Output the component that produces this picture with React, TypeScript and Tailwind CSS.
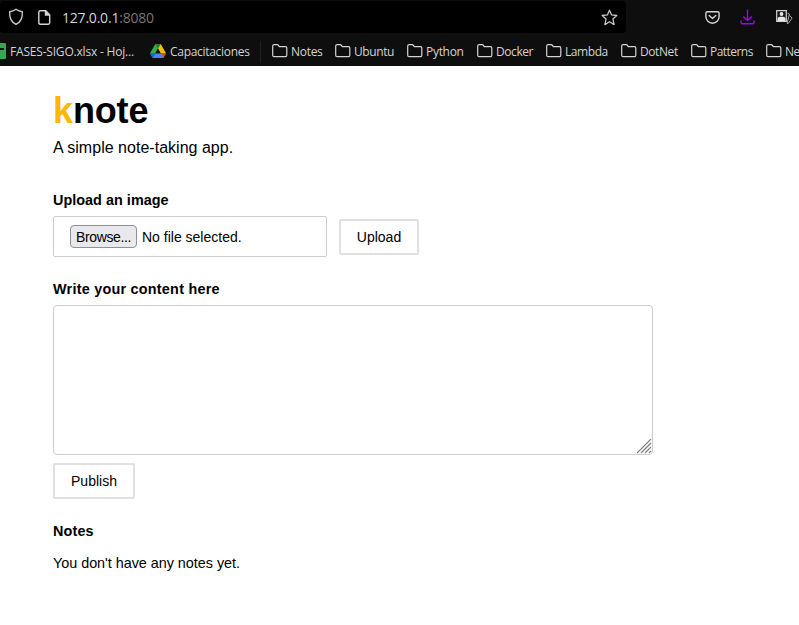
import type { ReactNode } from "react";

function Folder() {
  return (
    <svg width="16" height="14" viewBox="0 0 16 14" fill="none" stroke="#d4d4d4" strokeWidth="1.2" className="-mt-px shrink-0">
      <path d="M.7 2.200Q.7.700 2.200.700h3q.8 0 1.200.6l.9 1.300H13.500q1.300 0 1.300 1.300v7.400q0 1.300-1.300 1.300H2.200Q.7 12.600.7 11.300Z" />
    </svg>
  );
}

function Bookmark({ width, tracking = "tracking-[-0.025em]", children }: { width: string; tracking?: string; children: ReactNode }) {
  return (
    <div className={`flex shrink-0 items-center gap-[3px] ${width}`}>
      <Folder />
      <span className={tracking}>{children}</span>
    </div>
  );
}

function Browser() {
  return (
    <header className="h-[66px] overflow-hidden bg-[#0e0e0e] font-['Open_Sans','Noto_Sans',sans-serif] text-[#d4d4d4]">
      <div className="flex h-[33px] items-center pt-px">
        <div className="flex h-8 w-[626px] shrink-0 items-center rounded-[4px] bg-black pr-2 pl-2">
          <svg width="16" height="18" viewBox="0 0 16 18" fill="none" stroke="#c8c8c8" strokeWidth="1.4" className="shrink-0">
            <path d="M8 1.200C10 2.700 12 3.400 14.300 3.700C14.700 9 13.400 13.700 8 16.400C2.600 13.700 1.300 9 1.700 3.700C4 3.400 6 2.700 8 1.200Z" strokeLinejoin="round" />
          </svg>
          <svg width="13" height="15" viewBox="0 0 13 15" fill="none" stroke="#d4d4d4" strokeWidth="1.4" className="ml-[14px] shrink-0">
            <path d="M2.200.8h5.500l4 4v8q0 1.400-1.400 1.400H2.200Q.8 14.200.8 12.800V2.200Q.8.8 2.200.8Z" />
            <path d="M7.500.8v4.200h4.200" fill="#d4d4d4" />
          </svg>
          <span className="ml-[11px] text-[14px] tracking-[-0.015em]">
            127.0.0.1<span className="text-[#777]">:8080</span>
          </span>
          <svg width="17" height="17" viewBox="0 0 17 17" fill="none" stroke="#c8c8c8" strokeWidth="1.3" className="ml-auto shrink-0">
            <path d="m8.500 1.200 2.100 4.700 5.200.6-3.900 3.400 1.200 5.700-4.600-2.900-4.600 2.900 1.200-5.700L1.200 6.500l5.200-.6Z" strokeLinejoin="round" />
          </svg>
        </div>
        <svg width="15" height="13" viewBox="0 0 15 13" fill="none" stroke="#d4d4d4" strokeWidth="1.4" className="ml-[79px] shrink-0">
          <path d="M2.300.8h10.400q1.400 0 1.400 1.400v3.600a6.600 6.400 0 0 1-13.200 0V2.200Q.9.8 2.300.8Z" />
          <path d="m4.200 4.500 3.300 3.100 3.300-3.100" strokeLinecap="round" strokeLinejoin="round" />
        </svg>
        <svg width="15" height="16" viewBox="0 0 15 16" fill="none" stroke="#9a00ff" strokeWidth="1.4" className="ml-5 shrink-0">
          <path d="M7.500.5v11M3.200 7.400l4.300 4.200 4.300-4.200M1 11.500v1.800q0 1.500 1.500 1.500h10q1.500 0 1.500-1.500v-1.800" strokeLinejoin="round" />
        </svg>
        <svg width="17" height="16" viewBox="0 0 17 16" className="ml-[21px] shrink-0">
          <path d="M.7 1.700h9.600v10.600H.7Z" fill="#171717" stroke="#d4d4d4" strokeWidth="1.2" />
          <circle cx="5.500" cy="5" r="1.900" fill="#e8e8e8" />
          <path d="M1.500 11.900V10.200q0-2.500 2.500-2.500h3q2.500 0 2.500 2.500v1.700Z" fill="#e8e8e8" />
          <path d="m11.500 4.200 1.900.8-2.200 9.200M13.700 6.500l2.300 2.600-3.500 5.100-1.600.4" fill="none" stroke="#aaa" strokeWidth="1" />
        </svg>
      </div>
      <div className="flex h-[33px] items-center overflow-hidden pt-1 text-[12px] whitespace-nowrap">
        <div className="flex w-[150px] shrink-0 items-center">
          <svg width="6" height="16" viewBox="0 0 6 16" className="-mt-px shrink-0">
            <path d="M0 0h5q1 0 1 1v14q0 1-1 1H0Z" fill="#34a853" />
            <path d="M0 5h4v2H0Z" fill="#101810" />
          </svg>
          <span className="ml-[4px] tracking-[-0.016em]">FASES-SIGO.xlsx - Hoj...</span>
        </div>
        <div className="flex w-[110px] shrink-0 items-center">
          <svg width="16" height="14" viewBox="0 0 16 14" className="-mt-px shrink-0">
            <path d="M5.300 0 0 9.300 2.700 14 8 4.700Z" fill="#34a853" />
            <path d="M5.300 0h5.400L16 9.300h-5.400Z" fill="#fbbc04" />
            <path d="M5.300 0h5.400L8 4.700Z" fill="#188038" />
            <path d="M5.400 9.300H16L13.300 14H2.700Z" fill="#4285f4" />
            <path d="m0 9.300 2.700 4.700 2.700-4.700Z" fill="#1967d2" />
            <path d="M10.600 9.300H16L13.300 14Z" fill="#ea4335" />
            <path d="M8 4.700 5.400 9.300h5.200Z" fill="#0e0e0e" />
          </svg>
          <span className="ml-[4px] tracking-[-0.025em]">Capacitaciones</span>
        </div>
        <div className="mr-[11px] h-[22px] w-px shrink-0 bg-[#202020]" />
        <Bookmark width="w-[63px]">Notes</Bookmark>
        <Bookmark width="w-[72px]" tracking="tracking-[-0.035em]">Ubuntu</Bookmark>
        <Bookmark width="w-[70px]">Python</Bookmark>
        <Bookmark width="w-[69px]" tracking="tracking-[-0.035em]">Docker</Bookmark>
        <Bookmark width="w-[75px]" tracking="tracking-[-0.035em]">Lambda</Bookmark>
        <Bookmark width="w-[70px]" tracking="tracking-[-0.035em]">DotNet</Bookmark>
        <Bookmark width="w-[75px]" tracking="tracking-[-0.045em]">Patterns</Bookmark>
        <Bookmark width="w-[33px]" tracking="tracking-[-0.04em]">Ne</Bookmark>
      </div>
    </header>
  );
}

export default function App() {
  return (
    <div className="h-[625px] w-[799px] overflow-hidden bg-white font-['Liberation_Sans',Arial,sans-serif] text-[14.4px] text-black">
      <Browser />
      <main className="flex flex-col items-start pt-[25px] pl-[53px]">
        <h1 className="text-[36px] leading-10 font-bold tracking-[-0.004em]">
          <span className="text-[#ffb700]">k</span>note
        </h1>
        <p className="mt-[7px] text-base leading-5 tracking-[0.02px]">A simple note-taking app.</p>
        <h2 className="mt-8 leading-5 font-bold tracking-[0.03px]">Upload an image</h2>
        <div className="mt-[6px] flex items-center gap-3">
          <div className="flex h-[41px] w-[274px] items-center rounded-[2px] border border-[#ccc] pl-4 text-[14px]">
            <button className="h-[23px] w-[67px] rounded-[4px] border border-[#8f8f9d] bg-[#e9e9ed] pt-px text-[14px] leading-[21px] tracking-[-0.025em]">Browse...</button>
            <span className="ml-[5px] pt-px">No file selected.</span>
          </div>
          <button className="h-9 w-20 rounded-[2px] border-2 border-[#e1e1e1] pt-px text-[14px]">Upload</button>
        </div>
        <h2 className="mt-[22px] leading-5 font-bold tracking-[0.24px]">Write your content here</h2>
        <div className="mt-[6px] flex h-[150px] w-[600px] items-end justify-end rounded-[4px] border border-[#ccc]">
          <svg width="15" height="15" viewBox="0 0 15 15" fill="none" stroke="#808080" strokeWidth="1.2">
            <path d="M0 14 14 0M4 14 14 4M8 14l6-6M12 14l2-2" />
          </svg>
        </div>
        <button className="mt-2 h-9 w-[82px] rounded-[2px] border-2 border-[#e1e1e1] text-[14px]">Publish</button>
        <h2 className="mt-[22px] leading-5 font-bold tracking-[0.15px]">Notes</h2>
        <p className="mt-3 leading-5 tracking-[-0.03px]">You don't have any notes yet.</p>
      </main>
    </div>
  );
}
